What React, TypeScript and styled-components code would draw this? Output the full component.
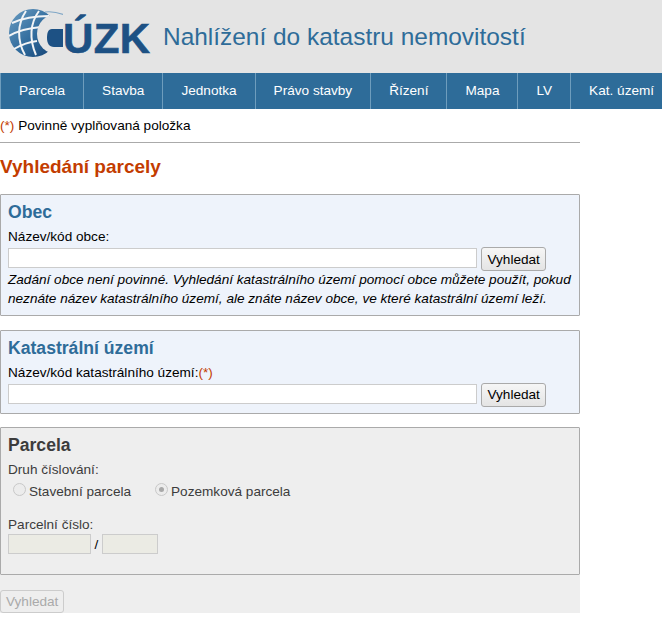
import React from 'react';
import styled, { createGlobalStyle } from 'styled-components';

const GlobalStyle = createGlobalStyle`
  html, body {
    margin: 0;
    padding: 0;
    background: #fff;
    font-family: "Liberation Sans", Arial, sans-serif;
    font-size: 13.6px;
    color: #000;
  }
`;

const Header = styled.header`
  display: flex;
  align-items: center;
  height: 73px;
  background: #e4e4e4;
  padding-left: 9px;
  box-sizing: border-box;
`;

const Logo = styled.div`
  display: flex;
  align-items: center;
  flex: none;
  width: 154px;
  height: 50px;
  margin-top: -5px;
`;

const LogoLetters = styled.span`
  margin-top: 10px;
  font-size: 42px;
  line-height: 46px;
  font-weight: 700;
  letter-spacing: 0.4px;
  -webkit-text-stroke: 0.6px #1d5184;
  color: #1d5184;
`;

const SiteTitle = styled.h1`
  margin: 0;
  font-size: 24.45px;
  font-weight: 400;
  color: #2e6c99;
  white-space: nowrap;
`;

const Nav = styled.nav`
  display: flex;
  height: 36px;
  background: #2e6c99;
  overflow: hidden;
`;

const NavItem = styled.a`
  flex: none;
  padding: 0 18px;
  line-height: 36px;
  color: #fff;
  border-left: 1px solid #6e9dbd;
  white-space: nowrap;
`;

const Main = styled.main`
  width: 580px;
`;

const Legend = styled.div`
  height: 33px;
  line-height: 34px;
  border-bottom: 1px solid #aaa;
`;

const Required = styled.span`
  color: #c33c00;
`;

const PageTitle = styled.h2`
  margin: 0;
  padding-top: 13px;
  height: 38px;
  font-size: 19px;
  line-height: 21px;
  font-weight: 700;
  color: #c33c00;
  box-sizing: content-box;
`;

const Panel = styled.section<{ $disabled?: boolean; $height: number }>`
  box-sizing: border-box;
  height: ${({ $height }) => $height}px;
  margin-bottom: 13.5px;
  padding: 8px 7px 0;
  border: 1px solid #aaa;
  border-radius: 1px;
  background: ${({ $disabled }) => ($disabled ? '#eee' : '#eef3fb')};
  &:last-of-type {
    margin-bottom: 0;
  }
`;

const PanelTitle = styled.h3<{ $muted?: boolean }>`
  margin: 0 0 7px;
  font-size: 17.6px;
  line-height: 19px;
  font-weight: 700;
  color: ${({ $muted }) => ($muted ? '#3c3c3c' : '#2e6c99')};
`;

const FieldLabel = styled.div<{ $muted?: boolean }>`
  line-height: 15px;
  color: ${({ $muted }) => ($muted ? '#3c3c3c' : '#000')};
`;

const SearchRow = styled.div`
  display: flex;
  align-items: flex-start;
  gap: 4px;
  margin-top: 4px;
`;

const TextInput = styled.input`
  box-sizing: border-box;
  width: 469px;
  height: 20px;
  margin: 0;
  padding: 0 3px;
  background: #fff;
  border: 1px solid #ccc;
  border-radius: 0;
`;

const Button = styled.button<{ $disabled?: boolean }>`
  box-sizing: border-box;
  height: ${({ $disabled }) => ($disabled ? 23 : 24)}px;
  margin-top: ${({ $disabled }) => ($disabled ? 0 : -1)}px;
  padding: 0 ${({ $disabled }) => ($disabled ? 5 : 5.5)}px;
  font-family: inherit;
  font-size: 13.6px;
  color: ${({ $disabled }) => ($disabled ? '#aaa' : '#000')};
  background: ${({ $disabled }) =>
    $disabled ? '#eee' : 'linear-gradient(#f6f6f6, #e4e4e4)'};
  border: 1px solid ${({ $disabled }) => ($disabled ? '#ccc' : '#aaa')};
  border-radius: 3px;
`;

const Note = styled.p`
  margin: -1px 0 0;
  font-style: italic;
  line-height: 19px;
  color: #000;
`;

const RadioRow = styled.div`
  display: flex;
  align-items: center;
  height: 18px;
  margin-top: 5px;
  padding-left: 5px;
  color: #3c3c3c;
`;

const RadioLabel = styled.label`
  display: flex;
  align-items: center;
  margin-right: 24px;
`;

const RadioDot = styled.span<{ $checked?: boolean }>`
  box-sizing: border-box;
  display: inline-flex;
  align-items: center;
  justify-content: center;
  width: 13px;
  height: 13px;
  margin: -3px 3px 0 0;
  border: 1px solid #c8c8c8;
  border-radius: 50%;
  background: #ececec;
  &::after {
    content: '';
    width: 5px;
    height: 5px;
    border-radius: 50%;
    background: ${({ $checked }) => ($checked ? '#a8a8a8' : 'transparent')};
  }
`;

const NumberLabel = styled(FieldLabel)`
  margin-top: 17px;
  margin-bottom: 2px;
`;

const NumberRow = styled.div`
  display: flex;
  align-items: center;
`;

const NumberInput = styled.input<{ $width: number }>`
  box-sizing: border-box;
  width: ${({ $width }) => $width}px;
  height: 20px;
  margin: 0;
  padding: 0;
  background: #ebebe4;
  border: 1px solid #ccc;
`;

const Slash = styled.span`
  width: 11px;
  text-align: center;
`;

const Footer = styled.div`
  height: 38px;
  padding-top: 15px;
  box-sizing: border-box;
  overflow: hidden;
  background: #eee;
`;

const navItems = ['Parcela', 'Stavba', 'Jednotka', 'Právo stavby', 'Řízení', 'Mapa', 'LV', 'Kat. území'];

const Globe = () => (
  <svg width="54" height="50" viewBox="0 0 54 50" style={{ flex: 'none' }}>
    <defs>
      <linearGradient id="globeFill" x1="0" y1="0" x2="1" y2="1">
        <stop offset="0" stopColor="#6b9dc2" />
        <stop offset="0.55" stopColor="#2f6a9c" />
        <stop offset="1" stopColor="#123f70" />
      </linearGradient>
    </defs>
    {/* outer ball */}
    <circle cx="24" cy="24" r="24" fill="url(#globeFill)" />
    {/* grid lines */}
    <g fill="none" stroke="#f2f4f6" strokeWidth="2">
      <path d="M3 14C14 9 26 7 40 7" />
      <path d="M0 27C10 21 20 19 32 18" />
      <path d="M5 40C12 36 19 33 28 32" />
      <path d="M17 2C8 15 8 32 16 46" />
      <path d="M30 2C21 14 20 30 27 46" />
    </g>
    {/* bite for the C */}
    <circle cx="48" cy="25" r="20" fill="#e4e4e4" />
    {/* thin top tail of the C */}
    <path d="M36 3C44 2 52 4 60 8" fill="none" stroke="#7fa6c6" strokeWidth="1.2" />
    {/* inner block of the C */}
    <path d="M43 20H54V38H45C40 38 38 34 38 29C38 24 39 20 43 20Z" fill="#1d5184" />
  </svg>
);

export default function App() {
  return (
    <>
      <GlobalStyle />
      <Header>
        <Logo>
          <Globe />
          <LogoLetters>ÚZK</LogoLetters>
        </Logo>
        <SiteTitle>Nahlížení do katastru nemovitostí</SiteTitle>
      </Header>
      <Nav>
        {navItems.map((item) => (
          <NavItem key={item}>{item}</NavItem>
        ))}
      </Nav>
      <Main>
        <Legend>
          <Required>(*)</Required> Povinně vyplňovaná položka
        </Legend>
        <PageTitle>Vyhledání parcely</PageTitle>
        <Panel $height={122}>
          <PanelTitle>Obec</PanelTitle>
          <FieldLabel>Název/kód obce:</FieldLabel>
          <SearchRow>
            <TextInput />
            <Button>Vyhledat</Button>
          </SearchRow>
          <Note>
            Zadání obce není povinné. Vyhledání katastrálního území pomocí obce můžete použít, pokud
            neznáte název katastrálního území, ale znáte název obce, ve které katastrální území leží.
          </Note>
        </Panel>
        <Panel $height={84}>
          <PanelTitle>Katastrální území</PanelTitle>
          <FieldLabel>
            Název/kód katastrálního území:<Required>(*)</Required>
          </FieldLabel>
          <SearchRow>
            <TextInput />
            <Button>Vyhledat</Button>
          </SearchRow>
        </Panel>
        <Panel $disabled $height={148}>
          <PanelTitle $muted>Parcela</PanelTitle>
          <FieldLabel $muted>Druh číslování:</FieldLabel>
          <RadioRow>
            <RadioLabel>
              <RadioDot />
              Stavební parcela
            </RadioLabel>
            <RadioLabel>
              <RadioDot $checked />
              Pozemková parcela
            </RadioLabel>
          </RadioRow>
          <NumberLabel $muted>Parcelní číslo:</NumberLabel>
          <NumberRow>
            <NumberInput $width={83} />
            <Slash>/</Slash>
            <NumberInput $width={56} />
          </NumberRow>
        </Panel>
        <Footer>
          <Button $disabled>Vyhledat</Button>
        </Footer>
      </Main>
    </>
  );
}
